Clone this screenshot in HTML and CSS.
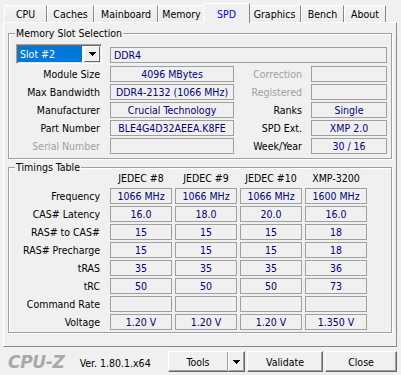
FILE: index.html
```html
<!DOCTYPE html>
<html lang="en">
<head>
  <meta charset="UTF-8" />
  <title>CPU-Z</title>
  <link rel="stylesheet" href="styles.css">
</head>
<body>

<div class="window">
  <div class="tabs">
    <div class="tab tab-cpu">CPU</div>
    <div class="tab tab-caches">Caches</div>
    <div class="tab tab-mainboard">Mainboard</div>
    <div class="tab tab-memory">Memory</div>
    <div class="tab tab-spd active">SPD</div>
    <div class="tab tab-graphics">Graphics</div>
    <div class="tab tab-bench">Bench</div>
    <div class="tab tab-about">About</div>
  </div>

  <div class="panel">
    <div class="group slot-group">
      <span class="group-title">Memory Slot Selection</span>
      <div class="slot-grid">
        <div class="select">
          <span class="select-value">Slot #2</span>
          <span class="select-btn">
            <svg width="7" height="4" viewBox="0 0 7 4"><path d="M0 0h7v1h-1v1h-1v1h-1v1h-1v-1h-1v-1h-1v-1h-1z"/></svg>
          </span>
        </div>
        <div class="box type-box">DDR4</div>

        <div class="label">Module Size</div>
        <div class="box">4096 MBytes</div>
        <div class="label right dim">Correction</div>
        <div class="box"></div>

        <div class="label">Max Bandwidth</div>
        <div class="box">DDR4-2132 (1066 MHz)</div>
        <div class="label right dim">Registered</div>
        <div class="box"></div>

        <div class="label">Manufacturer</div>
        <div class="box">Crucial Technology</div>
        <div class="label right">Ranks</div>
        <div class="box">Single</div>

        <div class="label">Part Number</div>
        <div class="box">BLE4G4D32AEEA.K8FE</div>
        <div class="label right">SPD Ext.</div>
        <div class="box">XMP 2.0</div>

        <div class="label dim">Serial Number</div>
        <div class="box"></div>
        <div class="label right">Week/Year</div>
        <div class="box">30 / 16</div>
      </div>
    </div>

    <div class="group timings-group">
      <span class="group-title">Timings Table</span>
      <div class="timings-grid" id="timings"></div>
    </div>
  </div>

  <div class="footer">
    <div class="logo">CPU-Z</div>
    <div class="version">Ver. 1.80.1.x64</div>
    <div class="buttons">
      <div class="btn split">
        <span class="split-main">Tools</span>
        <span class="split-arrow">
          <svg width="7" height="4" viewBox="0 0 7 4"><path d="M0 0h7v1h-1v1h-1v1h-1v1h-1v-1h-1v-1h-1v-1h-1z"/></svg>
        </span>
      </div>
      <div class="btn btn-validate">Validate</div>
      <div class="btn btn-close">Close</div>
    </div>
  </div>
</div>

<script>
  const headers = ["JEDEC #8", "JEDEC #9", "JEDEC #10", "XMP-3200"];
  const rows = [
    ["Frequency", "1066 MHz", "1066 MHz", "1066 MHz", "1600 MHz"],
    ["CAS# Latency", "16.0", "18.0", "20.0", "16.0"],
    ["RAS# to CAS#", "15", "15", "15", "18"],
    ["RAS# Precharge", "15", "15", "15", "18"],
    ["tRAS", "35", "35", "35", "36"],
    ["tRC", "50", "50", "50", "73"],
    ["Command Rate", "", "", "", ""],
    ["Voltage", "1.20 V", "1.20 V", "1.20 V", "1.350 V"]
  ];

  const grid = document.getElementById("timings");

  function cell(cls, text) {
    const div = document.createElement("div");
    div.className = cls;
    div.textContent = text;
    grid.appendChild(div);
  }

  cell("label", "");
  headers.forEach(h => cell("col-head", h));

  rows.forEach(row => {
    cell("label", row[0]);
    row.slice(1).forEach(v => cell("box", v));
  });
</script>
</body>
</html>
```

FILE: styles.css
```css
* { box-sizing: border-box; }

body {
  margin: 0;
  background: #f0f0f0;
  font-family: "DejaVu Sans Condensed", "DejaVu Sans", "Liberation Sans", sans-serif;
  font-stretch: condensed;
  font-size: 10.5px;
  color: #000;
}

.window {
  width: 401px;
  height: 375px;
  padding: 3px 4px 0 3px;
}

/* tab strip */
.tabs {
  display: flex;
  align-items: flex-end;
  height: 19px;
  padding-left: 1px;
}

.tab {
  flex: none;
  height: 17px;
  line-height: 16px;
  text-align: center;
  white-space: nowrap;
  border-top: 1px solid #fff;
  border-left: 1px solid #fff;
  border-right: 1px solid #888;
  background: linear-gradient(#f4f4f4, #ececec);
}

.tab-cpu { width: 43px; }
.tab-caches { width: 47px; }
.tab-mainboard { width: 64px; }
.tab-memory { width: 47px; }
.tab-spd { width: 43px; }
.tab-graphics { width: 53px; }
.tab-bench { width: 43px; }
.tab-about { width: 42px; }

.tab.active {
  position: relative;
  z-index: 1;
  width: 47px;
  height: 20px;
  margin: 0 -2px -1px;
  padding-top: 2px;
  background: #f0f0f0;
  color: #0000ff;
}

/* page panel */
.panel {
  border-top: 1px solid #fff;
  border-left: 1px solid #fff;
  border-right: 1px solid #888;
  border-bottom: 1px solid #888;
  padding: 10px 4px 13px 4px;
}

.group {
  position: relative;
  border: 1px solid #a0a0a0;
  box-shadow: inset 1px 1px 0 #fff, 1px 1px 0 #fff;
}

.group-title {
  position: absolute;
  top: -7px;
  left: 6px;
  padding: 0 1px;
  line-height: 13px;
  background: #f0f0f0;
}

.slot-group {
  padding: 10px 0 4px;
}

.slot-grid {
  display: grid;
  grid-template-columns: 101px 124px 77px 76px;
  grid-template-rows: 20px repeat(5, 16px);
  row-gap: 2px;
}

.label {
  text-align: right;
  padding-right: 10px;
  line-height: 16px;
  white-space: nowrap;
}

.label.right { padding-right: 9px; }
.dim { color: #a0a0a0; }

.box {
  height: 16px;
  border: 1px solid #a0a0a0;
  line-height: 14px;
  text-align: center;
  color: #000080;
  white-space: nowrap;
  overflow: hidden;
}

.type-box {
  grid-column: 2 / 5;
  align-self: end;
  margin-bottom: 1px;
  text-align: left;
  padding-left: 3px;
}

.select {
  display: flex;
  width: 86px;
  height: 20px;
  margin-left: 7px;
  border-top: 1px solid #a0a0a0;
  border-left: 1px solid #a0a0a0;
  border-right: 1px solid #fff;
  border-bottom: 1px solid #fff;
  box-shadow: inset 1px 1px 0 #696969, inset -1px -1px 0 #e3e3e3;
  padding: 1px;
  background: #fff;
}

.select-value {
  width: 65px;
  background: #0078d7;
  color: #fff;
  line-height: 16px;
  padding-left: 2px;
}

.select-btn {
  display: flex;
  align-items: center;
  justify-content: center;
  width: 16px;
  margin-left: 2px;
  background: #f0f0f0;
  border-top: 1px solid #fff;
  border-left: 1px solid #fff;
  border-right: 1px solid #696969;
  border-bottom: 1px solid #696969;
}

/* timings */
.timings-group {
  margin-top: 8px;
  padding: 2px 0;
}

.timings-grid {
  display: grid;
  grid-template-columns: 98px repeat(4, 62px);
  column-gap: 3px;
  grid-auto-rows: 16px;
  row-gap: 2px;
}

.timings-grid .label { padding-right: 7px; }

.col-head {
  text-align: center;
  line-height: 16px;
  white-space: nowrap;
}

/* bottom bar */
.footer {
  display: flex;
  align-items: center;
  padding-top: 4px;
  height: 25px;
}

.logo {
  margin-left: 5px;
  font-family: "DejaVu Sans", sans-serif;
  font-stretch: normal;
  font-weight: bold;
  font-style: italic;
  font-size: 17px;
  color: #a8a8a8;
  letter-spacing: -0.3px;
}

.version {
  margin-left: 15px;
  padding-top: 3px;
}

.buttons {
  display: flex;
  gap: 2px;
  margin-left: auto;
}

.btn {
  display: flex;
  align-items: center;
  justify-content: center;
  height: 21px;
  background: #f0f0f0;
  border-top: 1px solid #fff;
  border-left: 1px solid #fff;
  border-right: 1px solid #696969;
  border-bottom: 1px solid #696969;
  box-shadow: inset -1px -1px 0 #a0a0a0;
}

.split { width: 77px; justify-content: flex-start; }
.btn-validate { width: 76px; }
.btn-close { width: 72px; }

.split-main {
  width: 58px;
  text-align: center;
}

.split-arrow {
  display: flex;
  align-items: center;
  justify-content: center;
  flex: 1;
  height: 100%;
  border-left: 1px solid #a0a0a0;
  box-shadow: inset 1px 0 0 #fff;
}
```
